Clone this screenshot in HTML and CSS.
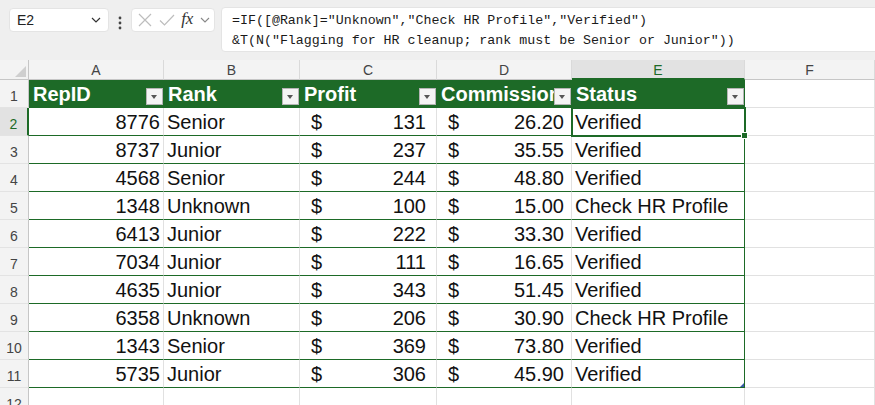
FILE: index.html
```html
<!DOCTYPE html>
<html lang="en">
<head>
    <meta charset="UTF-8">
    <title>Rep Status</title>
    <link rel="stylesheet" href="styles.css">
</head>
<body>

    <div class="toolbar">
        <div class="name-box">
            <span>E2</span>
            <svg class="chev" width="10" height="6" viewBox="0 0 10 6"><path d="M1 1l4 4 4-4" fill="none" stroke="#333" stroke-width="1.2"/></svg>
        </div>
        <svg class="dots" width="4" height="14" viewBox="0 0 4 14"><circle cx="2" cy="2" r="1.4" fill="#444"/><circle cx="2" cy="7" r="1.4" fill="#444"/><circle cx="2" cy="12" r="1.4" fill="#444"/></svg>
        <div class="fx-box">
            <svg width="14" height="14" viewBox="0 0 14 14"><path d="M1 1l12 12M13 1L1 13" stroke="#bdbdbd" stroke-width="1.2"/></svg>
            <svg width="16" height="14" viewBox="0 0 16 14"><path d="M1 7.5l4.5 4.5L15 2" fill="none" stroke="#bdbdbd" stroke-width="1.2"/></svg>
            <span class="fx">fx</span>
            <svg width="10" height="6" viewBox="0 0 10 6"><path d="M1 1l4 4 4-4" fill="none" stroke="#888" stroke-width="1.1"/></svg>
        </div>
        <div class="formula">=IF([@Rank]="Unknown","Check HR Profile","Verified")<br>&amp;T(N("Flagging for HR cleanup; rank must be Senior or Junior"))</div>
    </div>

    <div id="sheet" class="sheet"></div>

    <script>
        const sheet = document.getElementById('sheet');
        const headers = ['RepID', 'Rank', 'Profit', 'Commission', 'Status'];
        const data = [
            [8776, 'Senior', 131, '26.20', 'Verified'],
            [8737, 'Junior', 237, '35.55', 'Verified'],
            [4568, 'Senior', 244, '48.80', 'Verified'],
            [1348, 'Unknown', 100, '15.00', 'Check HR Profile'],
            [6413, 'Junior', 222, '33.30', 'Verified'],
            [7034, 'Junior', 111, '16.65', 'Verified'],
            [4635, 'Junior', 343, '51.45', 'Verified'],
            [6358, 'Unknown', 206, '30.90', 'Check HR Profile'],
            [1343, 'Senior', 369, '73.80', 'Verified'],
            [5735, 'Junior', 306, '45.90', 'Verified']
        ];

        function cell(cls, html) {
            const div = document.createElement('div');
            div.className = 'cell ' + cls;
            div.innerHTML = html || '';
            sheet.appendChild(div);
            return div;
        }

        // column letters
        cell('corner');
        ['A', 'B', 'C', 'D', 'E', 'F'].forEach(letter => {
            cell(letter === 'E' ? 'col-head sel' : 'col-head', letter);
        });

        // table header row
        cell('row-head', '1');
        headers.forEach((name, i) => {
            cell(i === 4 ? 'th last' : 'th', `<span class="th-text">${name}</span><span class="filter"></span>`);
        });
        cell('blank');

        // data rows
        data.forEach((row, index) => {
            const [id, rank, profit, commission, status] = row;
            cell(index === 0 ? 'row-head sel' : 'row-head', index + 2);
            cell('td num', id);
            cell('td', rank);
            cell('td acct acct-c', `<span>$</span><span>${profit}</span>`);
            cell('td acct acct-d', `<span>$</span><span>${commission}</span>`);
            const last = cell(index === 0 ? 'td last active' : 'td last', status);
            if (index === data.length - 1) {
                last.classList.add('resize');
            }
            cell('blank');
        });

        // empty row 12
        cell('row-head', '12');
        for (let i = 0; i < 6; i++) {
            cell('blank');
        }
    </script>

</body>
</html>
```

FILE: styles.css
```css
body {
    margin: 0;
    width: 875px;
    height: 405px;
    overflow: hidden;
    background-color: #ffffff;
    font-family: "Liberation Sans", Arial, sans-serif;
}
.toolbar {
    height: 60px;
    box-sizing: border-box;
    padding: 7px 0 0 9px;
    background-color: #efefef;
    display: flex;
    align-items: flex-start;
}
.name-box {
    width: 100px;
    height: 24px;
    margin-top: 1px;
    box-sizing: border-box;
    padding: 0 7px 0 7px;
    background-color: #ffffff;
    border: 1px solid #e4e4e4;
    border-radius: 4px;
    display: flex;
    align-items: center;
    justify-content: space-between;
    font-size: 14px;
    color: #222;
}
.dots {
    margin: 9px 0 0 9px;
}
.fx-box {
    width: 84px;
    height: 24px;
    margin: 1px 0 0 9px;
    box-sizing: border-box;
    padding: 0 4px 0 6px;
    background-color: #ffffff;
    border: 1px solid #e4e4e4;
    border-radius: 4px;
    display: flex;
    align-items: center;
    justify-content: space-between;
}
.fx {
    font-family: "Liberation Serif", serif;
    font-style: italic;
    font-size: 17px;
    color: #333;
    margin-top: -3px;
}
.formula {
    flex: 1;
    height: 45px;
    margin-left: 6px;
    margin-right: -6px;
    box-sizing: border-box;
    padding: 3px 0 0 10px;
    background-color: #ffffff;
    border: 1px solid #e4e4e4;
    border-radius: 4px;
    font-family: "Liberation Mono", monospace;
    font-size: 13.3px;
    line-height: 20px;
    color: #1a1a1a;
    white-space: nowrap;
}
.sheet {
    display: grid;
    grid-template-columns: 29px 135px 136px 137px 135px 173px 1fr;
    grid-template-rows: 20px repeat(12, 28px);
}
.cell {
    box-sizing: border-box;
    border-right: 1px solid #e1e1e1;
    border-bottom: 1px solid #e1e1e1;
    display: flex;
    align-items: center;
    padding: 0 3px;
    overflow: hidden;
    white-space: nowrap;
    font-size: 20px;
    color: #111;
}
.corner {
    position: relative;
    background-color: #f3f3f3;
    border-right: 1px solid #c6c6c6;
    border-bottom: 1px solid #c6c6c6;
}
.corner::after {
    content: "";
    position: absolute;
    right: 2px;
    bottom: 2px;
    border-style: solid;
    border-width: 0 0 11px 11px;
    border-color: transparent transparent #cfcfcf transparent;
}
.col-head {
    justify-content: center;
    padding-top: 1px;
    background-color: #f3f3f3;
    border-bottom: 1px solid #c6c6c6;
    border-right: 1px solid #dadada;
    font-size: 14px;
    color: #444;
}
.col-head.sel {
    background-color: #e2e2e2;
    border-bottom: 2px solid #1d6a27;
    color: #1d6a27;
}
.row-head {
    justify-content: center;
    padding-top: 4px;
    background-color: #f3f3f3;
    border-right: 1px solid #c6c6c6;
    border-bottom: 1px solid #e3e3e3;
    font-size: 14px;
    color: #444;
}
.row-head.sel {
    background-color: #e2e2e2;
    border-right: 2px solid #1d6a27;
    color: #1d6a27;
}
.th {
    position: relative;
    background-color: #1d6a27;
    border-right-color: #1d6a27;
    border-bottom-color: #1d6a27;
    color: #ffffff;
    font-weight: bold;
    padding-left: 4px;
    padding-top: 1px;
}
.filter {
    position: absolute;
    right: 0;
    bottom: 2px;
    width: 17px;
    height: 17px;
    box-sizing: border-box;
    background-color: #f4f4f4;
    border: 1px solid #b5b5b5;
}
.filter::after {
    content: "";
    position: absolute;
    left: 4px;
    top: 6px;
    border-style: solid;
    border-width: 4px 3.5px 0 3.5px;
    border-color: #555 transparent transparent transparent;
}
.td {
    border-bottom-color: #1d6a27;
    padding-top: 2px;
}
.last {
    border-right-color: #1d6a27;
}
.num {
    justify-content: flex-end;
}
.acct {
    justify-content: space-between;
    padding-left: 11px;
}
.acct-c {
    padding-right: 10px;
}
.acct-d {
    padding-right: 7px;
}
.active {
    position: relative;
    overflow: visible;
    outline: 2px solid #1d6a27;
    outline-offset: -1px;
    z-index: 2;
}
.active::after {
    content: "";
    position: absolute;
    right: -4px;
    bottom: -4px;
    width: 5px;
    height: 5px;
    background-color: #1d6a27;
    border: 1px solid #ffffff;
}
.resize {
    position: relative;
    overflow: visible;
}
.resize::after {
    content: "";
    position: absolute;
    right: 0;
    bottom: 0;
    border-style: solid;
    border-width: 0 0 4px 4px;
    border-color: transparent transparent #3a5aa8 transparent;
}
.blank {
    font-size: 14px;
}
```
